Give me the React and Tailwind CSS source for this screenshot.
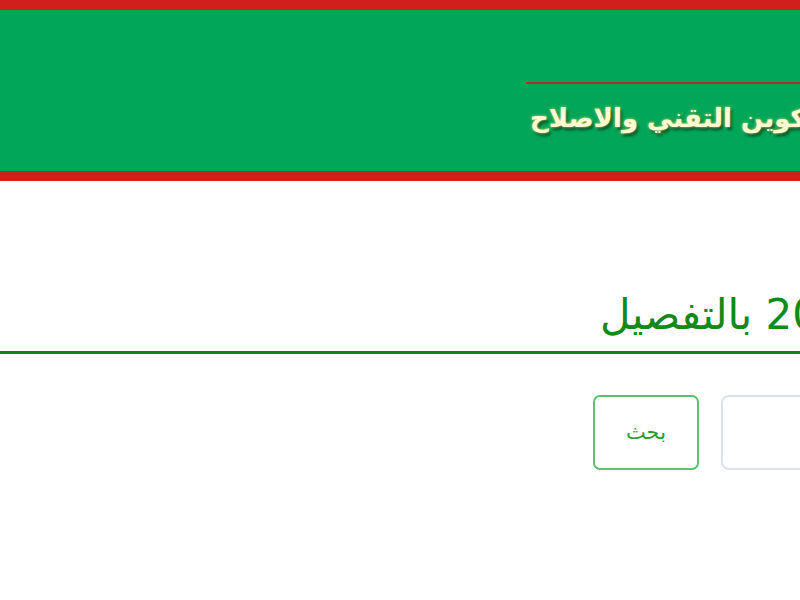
export default function App() {
  return (
    <div className="w-[800px] h-[600px] overflow-hidden bg-white" style={{ fontFamily: '"DejaVu Sans", "Noto Sans", sans-serif' }}>
      <div className="h-[10px] bg-[#d21f1c]" />
      <div className="h-[161px] bg-[#02a659] pt-[72px] pl-[526px] overflow-hidden">
        <div className="w-[1200px] h-[2px] bg-[#a5332b]" />
        <div className="pl-[4px] pt-[14px] whitespace-nowrap text-[26px] font-bold leading-[40px] text-[#fffbd6] [text-shadow:0_0_3px_rgba(255,230,90,0.9),2px_3px_3px_rgba(0,0,0,0.55)]">
          <span dir="rtl">وزارة التربية الوطنية والتكوين التقني والاصلاح</span>
        </div>
      </div>
      <div className="h-[10px] bg-[#d21f1c]" />
      <div className="h-[100px]" />
      <div className="pl-[600px] pt-[6px] whitespace-nowrap text-[42px] leading-[56px] text-[#13891a] h-[70px] overflow-hidden">
        <span dir="rtl">نتائج الامتحان 2024 بالتفصيل</span>
      </div>
      <div className="h-[3px] bg-[#0a8a0a]" />
      <div className="flex gap-[22px] pl-[593px] pt-[41px]">
        <button className="shrink-0 w-[106px] h-[75px] rounded-[7px] border-2 border-[#5cc26e] text-[#2f9a3a] text-[21px] font-medium bg-white">
          بحث
        </button>
        <div className="shrink-0 w-[300px] h-[75px] rounded-[8px] border-2 border-[#dde2ea] bg-white" />
      </div>
    </div>
  );
}
